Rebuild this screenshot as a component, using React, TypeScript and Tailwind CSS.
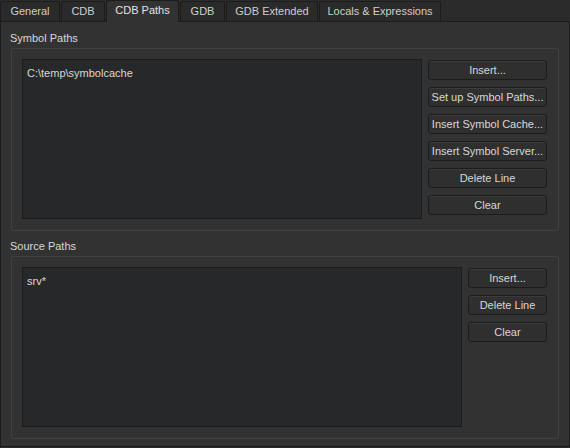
import React from 'react'

const TABS = [
  { label: 'General', w: 'w-[60px]' },
  { label: 'CDB', w: 'w-[44px]' },
  { label: 'CDB Paths', w: 'w-[73px]', active: true },
  { label: 'GDB', w: 'w-[45px]' },
  { label: 'GDB Extended', w: 'w-[92px]' },
  { label: 'Locals & Expressions', w: 'w-[122px]' },
]

function Button({ label, wide }: { label: string; wide?: boolean }) {
  return (
    <button
      className={
        'h-[20px] rounded-[3px] border border-[#1c1c1c] bg-[#2f2f2f] text-[#d8d8d8] leading-none shadow-[inset_0_1px_0_#3b3b3b] ' +
        (wide ? 'w-[119px]' : 'w-[79px]')
      }
    >
      {label}
    </button>
  )
}

function Group({
  title,
  text,
  buttons,
  wide,
  editorW,
}: {
  title: string
  text: string
  buttons: string[]
  wide?: boolean
  editorW: string
}) {
  return (
    <div className="flex flex-col">
      <div className="h-[20px] flex items-center -ml-[1px] text-[#d8d8d8]">{title}</div>
      <div className="h-[183px] border border-[#414141] rounded-[2px] pl-[10px] pt-[10px] flex gap-[6px]">
        <div className={'h-[160px] bg-[#27282a] border border-[#1c1c1c] px-[4px] pt-[5px] text-[#d8d8d8] ' + editorW}>
          {text}
        </div>
        <div className="flex flex-col gap-[7px] pt-[1px]">
          {buttons.map(b => (
            <Button key={b} label={b} wide={wide} />
          ))}
        </div>
      </div>
    </div>
  )
}

export default function App() {
  return (
    <div className="w-[570px] h-[448px] bg-[#2b2b2b] flex flex-col text-[11px] font-['Liberation_Sans',Arial,sans-serif]">
      <div className="h-[21px] flex items-end gap-[1px] relative z-10">
        {TABS.map(t =>
          t.active ? (
            <div
              key={t.label}
              className={'h-[22px] -mb-[1px] bg-[#323232] border border-b-0 border-[#1c1c1c] rounded-t-[3px] flex items-center justify-center text-[#e2e2e2] pb-[2px] ' + t.w}
            >
              {t.label}
            </div>
          ) : (
            <div
              key={t.label}
              className={'h-[20px] bg-[#2a2a2a] border border-b-0 border-[#1c1c1c] rounded-t-[3px] flex items-center justify-center text-[#cfcfcf] ' + t.w}
            >
              {t.label}
            </div>
          )
        )}
      </div>
      <div className="h-[426px] bg-[#323232] border border-[#1c1c1c] pl-[10px] pr-[10px] pt-[6px] flex flex-col gap-[5px]">
        <Group
          title="Symbol Paths"
          text="C:\temp\symbolcache"
          buttons={['Insert...', 'Set up Symbol Paths...', 'Insert Symbol Cache...', 'Insert Symbol Server...', 'Delete Line', 'Clear']}
          wide
          editorW="w-[400px]"
        />
        <Group title="Source Paths" text="srv*" buttons={['Insert...', 'Delete Line', 'Clear']} editorW="w-[440px]" />
      </div>
    </div>
  )
}
